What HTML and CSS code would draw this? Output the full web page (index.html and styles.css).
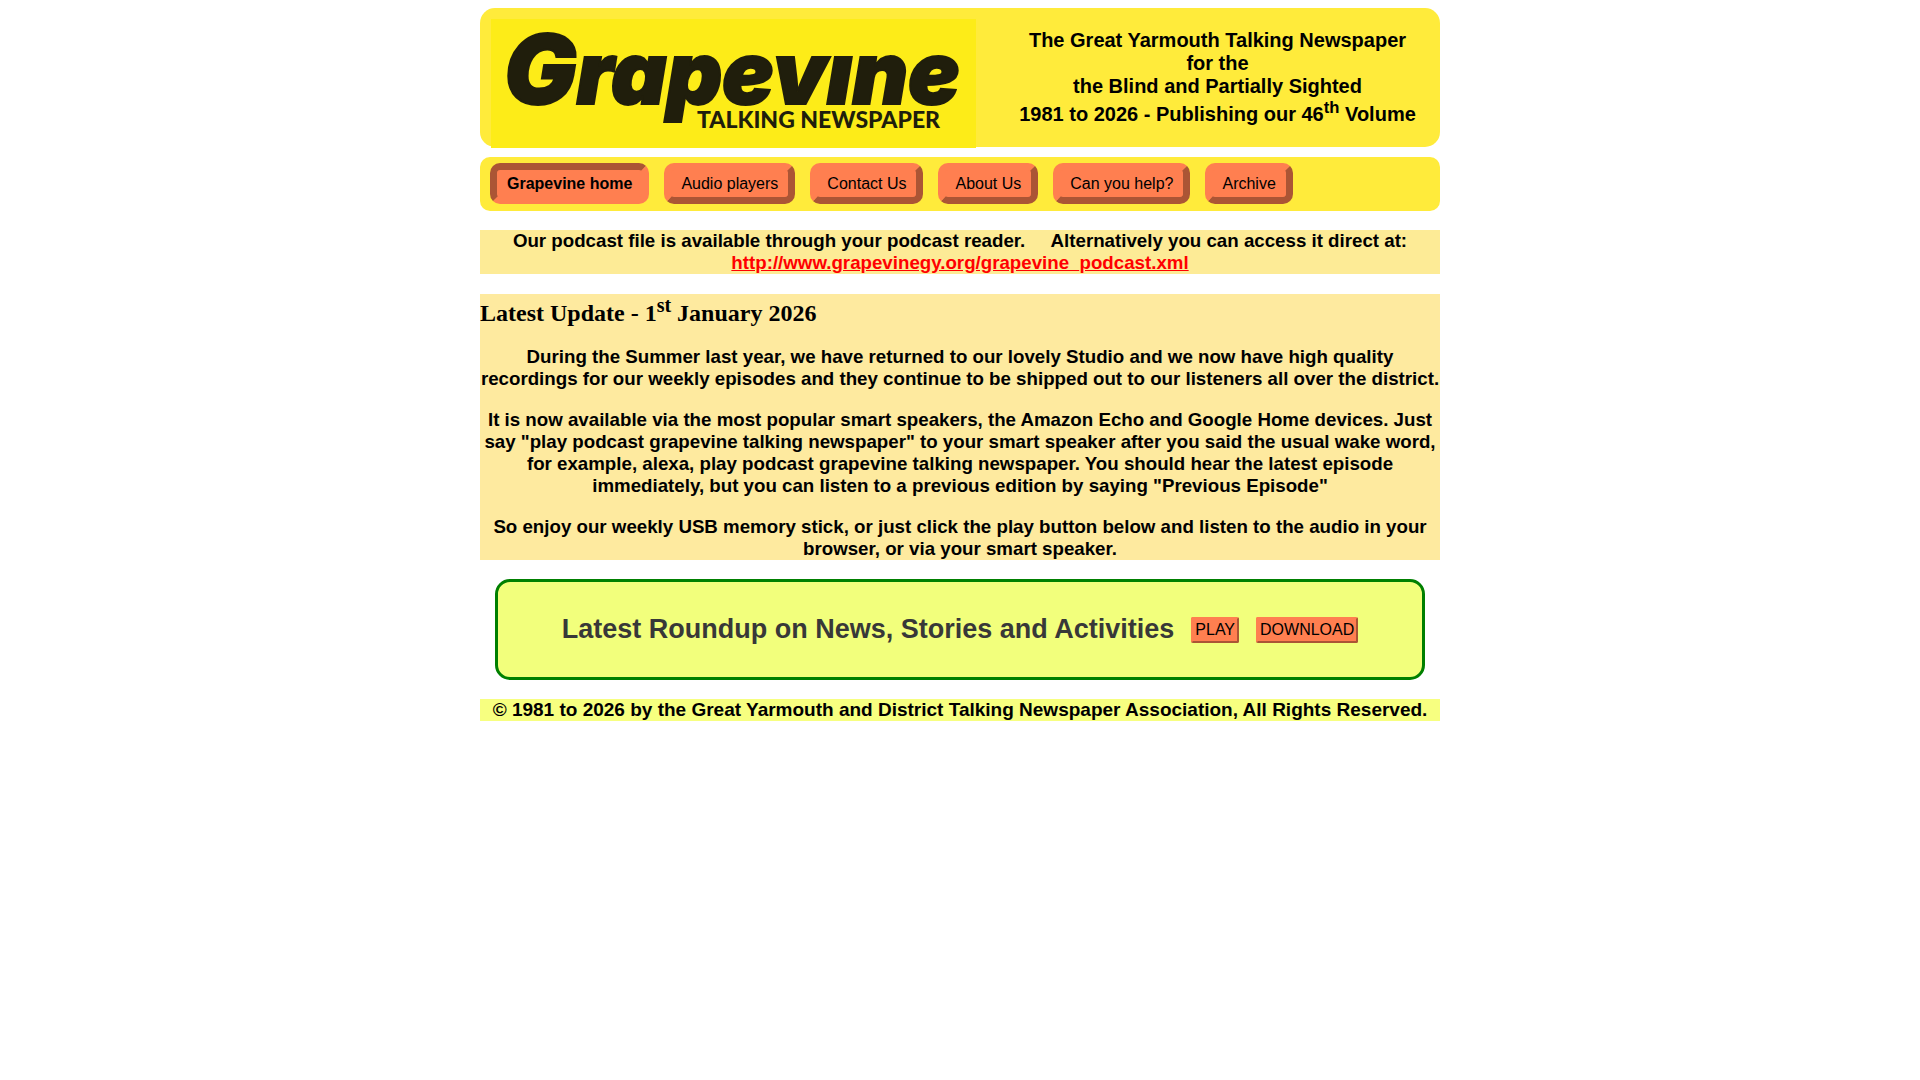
FILE: index.html
```html
<!DOCTYPE html>
<html lang="en">
<head>
    <meta charset="UTF-8">
    <meta name="viewport" content="width=device-width, initial-scale=1.0">
    <title>Grapevine Talking Newspaper</title>
    <link rel="stylesheet" href="styles.css">
</head>
<body>

    <header class="banner">
        <svg class="logo" viewBox="0 0 485 129" role="img" aria-label="Grapevine Talking Newspaper">
            <rect width="485" height="129" fill="#fdec18"/>
            <text class="logo-name" x="13" y="85"><tspan class="logo-cap">G</tspan>rapevıne</text>
            <text class="logo-sub" x="206" y="109">TALKING NEWSPAPER</text>
        </svg>
        <div class="tagline">
            The Great Yarmouth Talking Newspaper<br>
            for the<br>
            the Blind and Partially Sighted<br>
            1981 to 2026 - Publishing our 46<sup>th</sup> Volume
        </div>
    </header>

    <nav class="menu">
        <a class="current" href="#">Grapevine home</a>
        <a href="#">Audio players</a>
        <a href="#">Contact Us</a>
        <a href="#">About Us</a>
        <a href="#">Can you help?</a>
        <a href="#">Archive</a>
    </nav>

    <h3 class="podcast">Our podcast file is available through your podcast reader. &nbsp;&nbsp;&nbsp; Alternatively you can access it direct at: <a href="http://www.grapevinegy.org/grapevine_podcast.xml">http://www.grapevinegy.org/grapevine_podcast.xml</a></h3>

    <main class="update">
        <h2>Latest Update - 1<sup>st</sup> January 2026</h2>
        <h3>During the Summer last year, we have returned to our lovely Studio and we now have high quality recordings for our weekly episodes and they continue to be shipped out to our listeners all over the district.</h3>
        <h3>It is now available via the most popular smart speakers, the Amazon Echo and Google Home devices. Just say "play podcast grapevine talking newspaper" to your smart speaker after you said the usual wake word, for example, alexa, play podcast grapevine talking newspaper. You should hear the latest episode immediately, but you can listen to a previous edition by saying "Previous Episode"</h3>
        <h3>So enjoy our weekly USB memory stick, or just click the play button below and listen to the audio in your browser, or via your smart speaker.</h3>
    </main>

    <section class="roundup">
        <h2>Latest Roundup on News, Stories and Activities</h2>
        <button type="button">PLAY</button>
        <button type="button">DOWNLOAD</button>
    </section>

    <footer>
        <h3>© 1981 to 2026 by the Great Yarmouth and District Talking Newspaper Association, All Rights Reserved.</h3>
    </footer>

</body>
</html>
```
FILE: styles.css
```css
body { width: 50%; min-width: 960px; margin: 8px auto; background: white; color: black; font-family: "Liberation Sans", Arial, sans-serif; }
h3 { text-align: center; line-height: 22px; }

.banner {
    display: flex;
    align-items: center;
    box-sizing: border-box;
    padding: 11px 0 0 11px;
    margin-bottom: 10px;
    background-color: #ffeb3b;
    border-radius: 15px;
}
.logo { flex: none; width: 485px; height: 129px; margin-bottom: -1px; }
.logo-name { font: italic 900 86px Inter, sans-serif; font-feature-settings: "cv11"; fill: #201e0c; stroke: #201e0c; stroke-width: 2px; }
.logo-cap { font-size: 96px; }
.logo-sub { font: 900 23px Lato, sans-serif; fill: #201e0c; }
.tagline { flex: 1; padding: 0 0 11px 19px; font-size: 20px; font-weight: bold; text-align: center; }

.menu {
    display: flex;
    gap: 15px;
    padding: 6px 10px 7px;
    background-color: #ffeb3b;
    border-radius: 10px;
}
.menu a {
    padding: 5px 10px 4px;
    border: 7px outset coral;
    border-radius: 10px;
    background-color: coral;
    color: black;
    line-height: 18px;
    text-decoration: none;
}
.menu a.current { border-style: inset; font-weight: bold; }

.podcast { margin: 19px 0 20px; background-color: #fdeb96; }
.podcast a { color: red; }

.update { background-color: #feea9f; }
.update h2 { margin: 0 0 19px; font-family: "Liberation Serif", "Times New Roman", serif; font-size: 24px; }
.update h3 { margin: 19px 0 0; }

.roundup {
    display: flex;
    justify-content: center;
    align-items: center;
    gap: 17px;
    margin: 19px 15px;
    padding: 32px 0;
    border: 3px solid green;
    border-radius: 15px;
    background-color: #f2ff7c;
}
.roundup h2 { margin: 0; color: #383838; font-size: 27px; line-height: 31px; }
.roundup button {
    padding: 2px;
    border: 2px outset coral;
    border-radius: 2px;
    background-color: coral;
    color: black;
    font: 16px "Liberation Sans", Arial, sans-serif;
}

footer { background-color: #f7ff80; }
footer h3 { margin: 0; font-size: 19px; }
```
